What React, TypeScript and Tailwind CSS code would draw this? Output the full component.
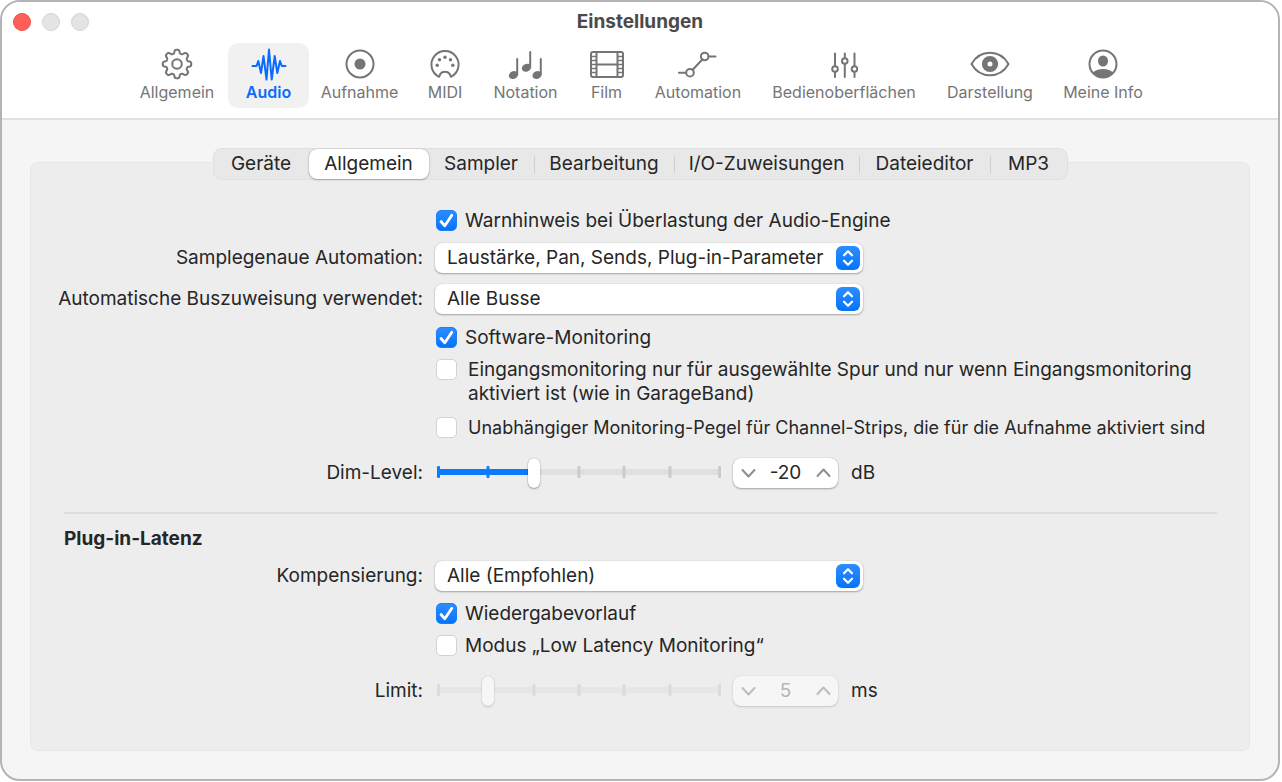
import React, { useState } from 'react';
import { clsx } from 'clsx';

interface ToolbarItem {
  label: string;
  width: string;
  icon: React.ReactNode;
}

const iconProps = {
  fill: 'none',
  stroke: 'currentColor',
  strokeWidth: 2,
  strokeLinecap: 'round' as const,
  strokeLinejoin: 'round' as const,
  'aria-hidden': true,
};

// Eight rounded teeth around the centre
const gearPath =
  'M' +
  Array.from({ length: 160 }, (_, i) => {
    const angle = (i / 160) * Math.PI * 2;
    const r = 12.5 + 1.8 * Math.tanh(2 * Math.cos(8 * angle) + 0.2);
    return `${(r * Math.cos(angle)).toFixed(2)} ${(r * Math.sin(angle)).toFixed(2)}`;
  }).join('L') +
  'Z';

function GearIcon() {
  return (
    <svg width="32" height="36" viewBox="-16 -18 32 36" {...iconProps}>
      <circle r="4.8" />
      <path d={gearPath} />
    </svg>
  );
}

function WaveIcon() {
  return (
    <svg width="36" height="36" viewBox="0 0 36 36" {...iconProps}>
      <path d="M1.5 20H5.500L7.300 15L10 27L12.500 10L15.500 33.500L18 3.500L20.700 33.500L23.700 10L26.300 27L29 15L30.800 20H34.500" />
    </svg>
  );
}

function RecordIcon() {
  return (
    <svg width="32" height="36" viewBox="-16 -18 32 36" {...iconProps}>
      <circle r="13.5" />
      <circle r="5.5" fill="currentColor" stroke="none" />
    </svg>
  );
}

function MidiIcon() {
  return (
    <svg width="32" height="36" viewBox="-16 -18 32 36" {...iconProps}>
      <path d="M-6 12.800A13.600 13.600 0 1 1 6 12.800L4.500 9.700C2.500 7.200 -2.500 7.200 -4.500 9.700Z" />
      <g fill="currentColor" stroke="none">
        <circle cx="-7.8" cy="1.3" r="1.7" />
        <circle cx="-5.5" cy="-4.2" r="1.7" />
        <circle cx="0" cy="-6.8" r="1.7" />
        <circle cx="5.5" cy="-4.2" r="1.7" />
        <circle cx="7.8" cy="1.3" r="1.7" />
      </g>
    </svg>
  );
}

function NotesIcon() {
  return (
    <svg width="36" height="36" viewBox="0 0 36 36" {...iconProps}>
      <path d="M9.200 13V28M22.200 6V21M32.800 13V28" />
      <g fill="currentColor" stroke="none">
        <ellipse cx="5.5" cy="29" rx="4.8" ry="3.8" transform="rotate(-24 5.5 29)" />
        <ellipse cx="18.5" cy="21.7" rx="4.8" ry="3.8" transform="rotate(-24 18.5 21.7)" />
        <ellipse cx="29.1" cy="29" rx="4.8" ry="3.8" transform="rotate(-24 29.1 29)" />
      </g>
    </svg>
  );
}

function FilmIcon() {
  return (
    <svg width="36" height="36" viewBox="0 0 36 36" {...iconProps}>
      <rect x="2" y="6" width="32" height="25" rx="2" />
      <path d="M7.500 6V31M28.500 6V31M7.500 18.500H28.500" />
      <path
        strokeWidth="1.6"
        d="M2 10.500H7M2 14.500H7M2 18.500H7M2 22.500H7M2 26.500H7M29 10.500H34M29 14.500H34M29 18.500H34M29 22.500H34M29 26.500H34"
      />
    </svg>
  );
}

function AutomationIcon() {
  return (
    <svg width="42" height="36" viewBox="0 0 42 36" {...iconProps}>
      <path d="M2 26.700H9M15.700 23.700L25.500 13.200M31.500 10.500H38.500" />
      <circle cx="13" cy="26.7" r="3.8" />
      <circle cx="27.7" cy="10.5" r="3.8" />
    </svg>
  );
}

function FadersIcon() {
  return (
    <svg width="28" height="36" viewBox="0 0 28 36" {...iconProps}>
      <path d="M5 7.500V20M5 26V31M14.800 7.500V12M14.800 18V31M24.500 7.500V20M24.500 26V31" />
      <circle cx="5" cy="23" r="2.8" />
      <circle cx="14.8" cy="15" r="2.8" />
      <circle cx="24.5" cy="23" r="2.8" />
    </svg>
  );
}

function EyeIcon() {
  return (
    <svg width="40" height="36" viewBox="-20 -18 40 36" {...iconProps}>
      <path d="M-18.500 0C-10 -15 10 -15 18.500 0C10 15 -10 15 -18.500 0Z" />
      <circle r="5.3" strokeWidth="5.6" />
    </svg>
  );
}

function PersonIcon() {
  return (
    <svg width="32" height="36" viewBox="-16 -18 32 36" {...iconProps}>
      <circle r="13.5" />
      <ellipse cy="-3" rx="5" ry="5.6" fill="currentColor" stroke="none" />
      <path d="M-10.200 9C-6.500 3.800 6.500 3.800 10.200 9C5 14.800 -5 14.800 -10.200 9Z" fill="currentColor" stroke="none" />
    </svg>
  );
}

const toolbarItems: ToolbarItem[] = [
  { label: 'Allgemein', width: 'w-[102px]', icon: <GearIcon /> },
  { label: 'Audio', width: 'w-[81px]', icon: <WaveIcon /> },
  { label: 'Aufnahme', width: 'w-[101px]', icon: <RecordIcon /> },
  { label: 'MIDI', width: 'w-[70px]', icon: <MidiIcon /> },
  { label: 'Notation', width: 'w-[91px]', icon: <NotesIcon /> },
  { label: 'Film', width: 'w-[71px]', icon: <FilmIcon /> },
  { label: 'Automation', width: 'w-[112px]', icon: <AutomationIcon /> },
  { label: 'Bedienoberflächen', width: 'w-[180px]', icon: <FadersIcon /> },
  { label: 'Darstellung', width: 'w-[112px]', icon: <EyeIcon /> },
  { label: 'Meine Info', width: 'w-[114px]', icon: <PersonIcon /> },
];

const tabs = [
  { label: 'Geräte', width: 'w-[95px]' },
  { label: 'Allgemein', width: 'w-[120px]' },
  { label: 'Sampler', width: 'w-[106px]' },
  { label: 'Bearbeitung', width: 'w-[140px]' },
  { label: 'I/O-Zuweisungen', width: 'w-[185px]' },
  { label: 'Dateieditor', width: 'w-[131px]' },
  { label: 'MP3', width: 'w-[76px]' },
];

function Row({ label, htmlFor, className, children }: {
  label?: string;
  htmlFor?: string;
  className?: string;
  children: React.ReactNode;
}) {
  return (
    <div className={clsx('grid grid-cols-[392px_1fr] items-center gap-3', className)}>
      <div className="text-right whitespace-nowrap">{label && <label htmlFor={htmlFor}>{label}</label>}</div>
      <div className="flex items-center min-w-0">{children}</div>
    </div>
  );
}

function Checkbox({ label, defaultChecked = false, wide = false }: {
  label: string;
  defaultChecked?: boolean;
  wide?: boolean;
}) {
  return (
    <label className={clsx('flex items-start', wide ? 'gap-[11px]' : 'gap-2')}>
      <span className="relative flex w-[21px] h-[21px] ml-px mt-px shrink-0">
        <input
          type="checkbox"
          defaultChecked={defaultChecked}
          className="peer appearance-none w-full h-full rounded-[5px] bg-white border border-[#d2d2d2] checked:border-[#1a7ff5] checked:bg-linear-to-b checked:from-[#2b8dff] checked:to-[#0074fb]"
        />
        <svg
          viewBox="0 0 21 21"
          className="absolute inset-0 hidden peer-checked:block pointer-events-none"
          fill="none"
          stroke="white"
          strokeWidth="2.8"
          strokeLinecap="round"
          strokeLinejoin="round"
          aria-hidden
        >
          <path d="M5 11.500L8.800 15.800L15.800 5.300" />
        </svg>
      </span>
      <span>{label}</span>
    </label>
  );
}

function Select({ id, value }: { id: string; value: string }) {
  return (
    <div className="relative w-[428px]">
      <select
        id={id}
        defaultValue={value}
        className="appearance-none block w-full h-[30px] pl-3 pr-8 rounded-[7px] bg-white shadow-[0_0_1px_rgba(0,0,0,0.25),0_1px_2px_rgba(0,0,0,0.3)]"
      >
        <option>{value}</option>
      </select>
      <span className="absolute right-[3px] top-[3px] w-6 h-6 rounded-[6px] bg-linear-to-b from-[#2b8dff] to-[#0074fb] pointer-events-none">
        <svg viewBox="0 0 24 24" fill="none" stroke="white" strokeWidth="2.2" strokeLinecap="round" strokeLinejoin="round" aria-hidden>
          <path d="M8 9.300L12 5.200L16 9.300M8 14.700L12 18.800L16 14.700" />
        </svg>
      </span>
    </div>
  );
}

function Chevron({ d }: { d: string }) {
  return (
    <svg width="15" height="12" viewBox="0 0 15 12" fill="none" stroke="#8e8e8e" strokeWidth="2" strokeLinecap="round" strokeLinejoin="round" aria-hidden>
      <path d={d} />
    </svg>
  );
}

function Level({ id, min, max, initial, unit, disabled = false }: {
  id: string;
  min: number;
  max: number;
  initial: number;
  unit: string;
  disabled?: boolean;
}) {
  const [value, setValue] = useState(initial);
  const ratio = (value - min) / (max - min);
  const ticks = [1.5, 51, 97, 142, 187, 233, 282.5];
  const fill = 6 + ratio * 272;
  const clamp = (v: number) => setValue(Math.min(max, Math.max(min, v)));

  return (
    <>
      <div className={clsx('relative w-[284px] h-[31px] ml-0.5', disabled && 'opacity-50')}>
        <svg className="absolute inset-0" width="284" height="31" aria-hidden>
          <rect x="0" y="12" width="284" height="6" rx="2" fill="#e0e0e0" />
          {!disabled && <rect x="0" y="12" width={fill} height="6" fill="#0a7aff" />}
          {ticks.map((x) => (
            <rect key={x} x={x - 1.5} y="9" width="3" height="12" rx="1" fill={!disabled && x < fill ? '#0a7aff' : '#cbcbcb'} />
          ))}
        </svg>
        <input
          id={id}
          type="range"
          min={min}
          max={max}
          value={value}
          disabled={disabled}
          onChange={(e) => setValue(Number(e.target.value))}
          className="relative block appearance-none w-full h-full bg-transparent [&::-webkit-slider-thumb]:appearance-none [&::-webkit-slider-thumb]:w-3 [&::-webkit-slider-thumb]:h-[30px] [&::-webkit-slider-thumb]:rounded-full [&::-webkit-slider-thumb]:bg-white [&::-webkit-slider-thumb]:shadow-[0_0_1px_rgba(0,0,0,0.4),0_1px_2px_rgba(0,0,0,0.3)]"
        />
      </div>
      <div
        className={clsx(
          'flex items-center w-[105px] h-[30px] ml-3 rounded-[8px] bg-white shadow-[0_0_1px_rgba(0,0,0,0.3),0_1px_2px_rgba(0,0,0,0.3)]',
          disabled && 'opacity-50',
        )}
      >
        <button aria-label="Verringern" disabled={disabled} onClick={() => clamp(value - 1)} className="flex items-center justify-center w-[30px] h-full">
          <Chevron d="M1.5 3L7.500 9.500L13.500 3" />
        </button>
        <input
          aria-label={unit}
          value={value}
          disabled={disabled}
          onChange={(e) => clamp(Number(e.target.value) || 0)}
          className={clsx('w-[45px] text-center bg-transparent', disabled && 'text-[#808080]')}
        />
        <button aria-label="Erhöhen" disabled={disabled} onClick={() => clamp(value + 1)} className="flex items-center justify-center w-[30px] h-full">
          <Chevron d="M1.5 9L7.500 2.500L13.500 9" />
        </button>
      </div>
      <span className="ml-[13px]">{unit}</span>
    </>
  );
}

export default function App() {
  const [section, setSection] = useState('Audio');
  const [tab, setTab] = useState(1);

  return (
    <div className="min-h-screen flex flex-col bg-white pr-0.5 pb-px font-['Inter','Liberation_Sans',sans-serif] text-[19px] leading-6 text-[#262626]">
      <div className="flex-1 flex flex-col rounded-[20px] border-2 border-[#b4b4b4] bg-[#f5f5f5] overflow-hidden">
        {/* Title bar and toolbar */}
        <header className="bg-white border-b-2 border-[#e0e0e0] pb-[10px]">
          <div className="grid grid-cols-[1fr_auto_1fr] items-center h-[39px]">
            <div className="flex gap-[11px] pl-[11px]">
              <button aria-label="Schließen" className="w-[18px] h-[18px] rounded-full bg-[#fe5f58] border border-[#e8504a]" />
              <button aria-label="Minimieren" className="w-[18px] h-[18px] rounded-full bg-[#e4e4e4] border border-[#d3d3d3]" />
              <button aria-label="Zoomen" className="w-[18px] h-[18px] rounded-full bg-[#e4e4e4] border border-[#d3d3d3]" />
            </div>
            <h1 className="font-bold text-[#4a4a4a]">Einstellungen</h1>
          </div>
          <nav className="flex justify-center mt-0.5 pl-[6px]">
            {toolbarItems.map((item) => (
              <button
                key={item.label}
                onClick={() => setSection(item.label)}
                className={clsx(
                  'flex flex-col items-center h-[65px] pt-[3px] rounded-[10px] text-base leading-5 whitespace-nowrap',
                  item.width,
                  section === item.label ? 'bg-[#f1f1f1] text-[#0a6cff] font-semibold' : 'text-[#757575]',
                )}
              >
                {item.icon}
                <span>{item.label}</span>
              </button>
            ))}
          </nav>
        </header>

        <main className="flex-1 flex flex-col px-7 pt-7 pb-7">
          {/* Tabs sit on the top edge of the panel */}
          <div role="tablist" className="relative z-10 flex self-center h-8 rounded-[9px] bg-[#e8e8e8] border border-[#e0e0e0]">
            {tabs.map((item, i) => (
              <button
                key={item.label}
                role="tab"
                aria-selected={tab === i}
                onClick={() => setTab(i)}
                className={clsx(
                  'flex items-center justify-center whitespace-nowrap',
                  item.width,
                  tab === i && 'rounded-[8px] bg-white shadow-[0_0_1px_rgba(0,0,0,0.4),0_1px_2px_rgba(0,0,0,0.25)]',
                )}
              >
                <span className="flex-1">{item.label}</span>
                {i > tab && i < tabs.length - 1 && <span className="w-px h-[17px] bg-[#d0d0d0]" />}
              </button>
            ))}
          </div>

          <section className="flex-1 -mt-[18px] pt-[46px] pb-10 rounded-[8px] bg-[#ededed] border border-[#e6e6e6]">
            <Row>
              <Checkbox label="Warnhinweis bei Überlastung der Audio-Engine" defaultChecked />
            </Row>
            <Row label="Samplegenaue Automation:" htmlFor="automation" className="mt-[10px]">
              <Select id="automation" value="Laustärke, Pan, Sends, Plug-in-Parameter" />
            </Row>
            <Row label="Automatische Buszuweisung verwendet:" htmlFor="bus" className="mt-[11px]">
              <Select id="bus" value="Alle Busse" />
            </Row>
            <Row className="mt-3">
              <Checkbox label="Software-Monitoring" defaultChecked />
            </Row>
            <Row className="mt-2 pr-8">
              <Checkbox
                wide
                label="Eingangsmonitoring nur für ausgewählte Spur und nur wenn Eingangsmonitoring aktiviert ist (wie in GarageBand)"
              />
            </Row>
            <Row className="mt-[10px] text-lg leading-6">
              <Checkbox wide label="Unabhängiger Monitoring-Pegel für Channel-Strips, die für die Aufnahme aktiviert sind" />
            </Row>
            <Row label="Dim-Level:" htmlFor="dim" className="mt-[17px]">
              <Level id="dim" min={-30} max={0} initial={-20} unit="dB" />
            </Row>

            <hr className="mt-6 ml-[33px] mr-8 border-t-2 border-[#dcdcdc]" />

            <h2 className="mt-[13px] ml-[33px] font-bold">Plug-in-Latenz</h2>
            <Row label="Kompensierung:" htmlFor="compensation" className="mt-[10px]">
              <Select id="compensation" value="Alle (Empfohlen)" />
            </Row>
            <Row className="mt-[11px]">
              <Checkbox label="Wiedergabevorlauf" defaultChecked />
            </Row>
            <Row className="mt-2">
              <Checkbox label="Modus „Low Latency Monitoring“" />
            </Row>
            <Row label="Limit:" htmlFor="limit" className="mt-[17px]">
              <Level id="limit" min={0} max={30} initial={5} unit="ms" disabled />
            </Row>
          </section>
        </main>
      </div>
    </div>
  );
}
